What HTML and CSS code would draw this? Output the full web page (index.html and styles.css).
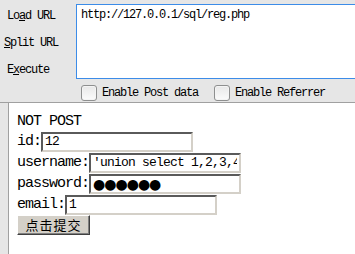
FILE: index.html
```
<!DOCTYPE html>
<html lang="en">
<head>
  <meta charset="UTF-8">
  <meta name="viewport" content="width=device-width, initial-scale=1.0">
  <title>reg.php</title>
  <link rel="stylesheet" href="styles.css">
</head>
<body>
  <!-- HackBar panel -->
  <div class="toolbar">
    <div class="actions">
      <div class="action load">Lo<u>a</u>d URL</div>
      <div class="action split"><u>S</u>plit URL</div>
      <div class="action exec">E<u>x</u>ecute</div>
    </div>
    <div class="main">
      <textarea class="url" spellcheck="false">http://127.0.0.1/sql/reg.php</textarea>
      <div class="options">
        <label class="opt"><input type="checkbox"> Enable Post data</label>
        <label class="opt"><input type="checkbox"> Enable Referrer</label>
      </div>
    </div>
  </div>

  <!-- page -->
  <div class="frame">
    <div class="gutter"></div>
    <form class="content" action="reg.php" method="get">
      <div class="title">NOT POST</div>
      <div class="row"><span class="lbl">id:</span><input type="text" name="id" value="12"></div>
      <div class="row"><span class="lbl">username:</span><input type="text" name="username" value="'union select 1,2,3,4#"></div>
      <div class="row"><span class="lbl">password:</span><input type="text" class="pw" name="password" value="●●●●●●"></div>
      <div class="row"><span class="lbl">email:</span><input type="text" name="email" value="1"></div>
      <button type="submit">点击提交</button>
    </form>
  </div>
</body>
</html>
```

FILE: styles.css
```
body {
  margin: 0;
  background: #fff;
  color: #000;
  height: 254px;
  overflow: hidden;
  display: flex;
  flex-direction: column;
}
.toolbar {
  display: flex;
  height: 102px;
  background: #e6e6e6;
  border-bottom: 1px solid #a0a0a0;
  overflow: hidden;
  font-family: "Liberation Mono", monospace;
  font-size: 12px;
  letter-spacing: -1.2px;
}
.actions {
  width: 76px;
  flex: none;
  padding-top: 3px;
}
.action {
  line-height: 27px;
  padding-left: 7px;
}
.action.split {
  padding-left: 4px;
}
.main {
  flex: 1;
  min-width: 0;
}
.url {
  display: block;
  box-sizing: border-box;
  width: 320px;
  height: 75px;
  margin: 4px 0 0;
  padding: 3px 4px;
  border: 1px solid #3c8ce8;
  outline: none;
  resize: none;
  font-family: "Liberation Mono", monospace;
  font-size: 12px;
  letter-spacing: -1.2px;
  line-height: 14px;
  color: #000;
  background: #fff;
}
.options {
  display: flex;
  align-items: center;
  height: 16px;
  margin-top: 6px;
  padding-left: 5px;
}
.opt {
  display: flex;
  align-items: center;
  margin-right: 16px;
}
.opt input {
  appearance: none;
  -webkit-appearance: none;
  width: 16px;
  height: 16px;
  margin: 0 5px 0 0;
  border: 1px solid #8e8f8f;
  border-radius: 3px;
  background: linear-gradient(#e8e8e8, #fbfbfb);
  box-shadow: inset 0 0 0 1px #f4f4f4;
}
.frame {
  flex: 1;
  display: flex;
}
.gutter {
  width: 8px;
  background: #e6e6e6;
  border-right: 1px solid #a0a0a0;
}
.content {
  flex: 1;
  margin: 0;
  padding: 9px 0 0 8px;
  font-family: "Liberation Mono", monospace;
  font-size: 15px;
  letter-spacing: -1px;
}
.title {
  line-height: 19px;
}
.row {
  display: flex;
  align-items: center;
  height: 21px;
}
.lbl {
  line-height: 20px;
}
.row input {
  box-sizing: border-box;
  width: 152px;
  height: 20px;
  margin: 0;
  padding: 0 2px;
  border: 2px solid;
  border-color: #5a5a5a #d4d0c8 #d4d0c8 #5a5a5a;
  outline: none;
  background: #fff;
  font-family: "Liberation Mono", monospace;
  font-size: 13px;
  letter-spacing: -0.8px;
  color: #000;
}
.row input.pw {
  font-family: "DejaVu Sans", sans-serif;
  font-size: 14px;
  letter-spacing: -1px;
}
button {
  box-sizing: border-box;
  width: 73px;
  height: 20px;
  margin: 0;
  padding: 0;
  background: #d4d0c8;
  border: 1px solid;
  border-color: #fff #404040 #404040 #fff;
  box-shadow: inset -1px -1px 0 #808080;
  font-family: "Noto Sans CJK SC", sans-serif;
  font-size: 13px;
  letter-spacing: 1px;
  line-height: 18px;
  color: #000;
}
```
